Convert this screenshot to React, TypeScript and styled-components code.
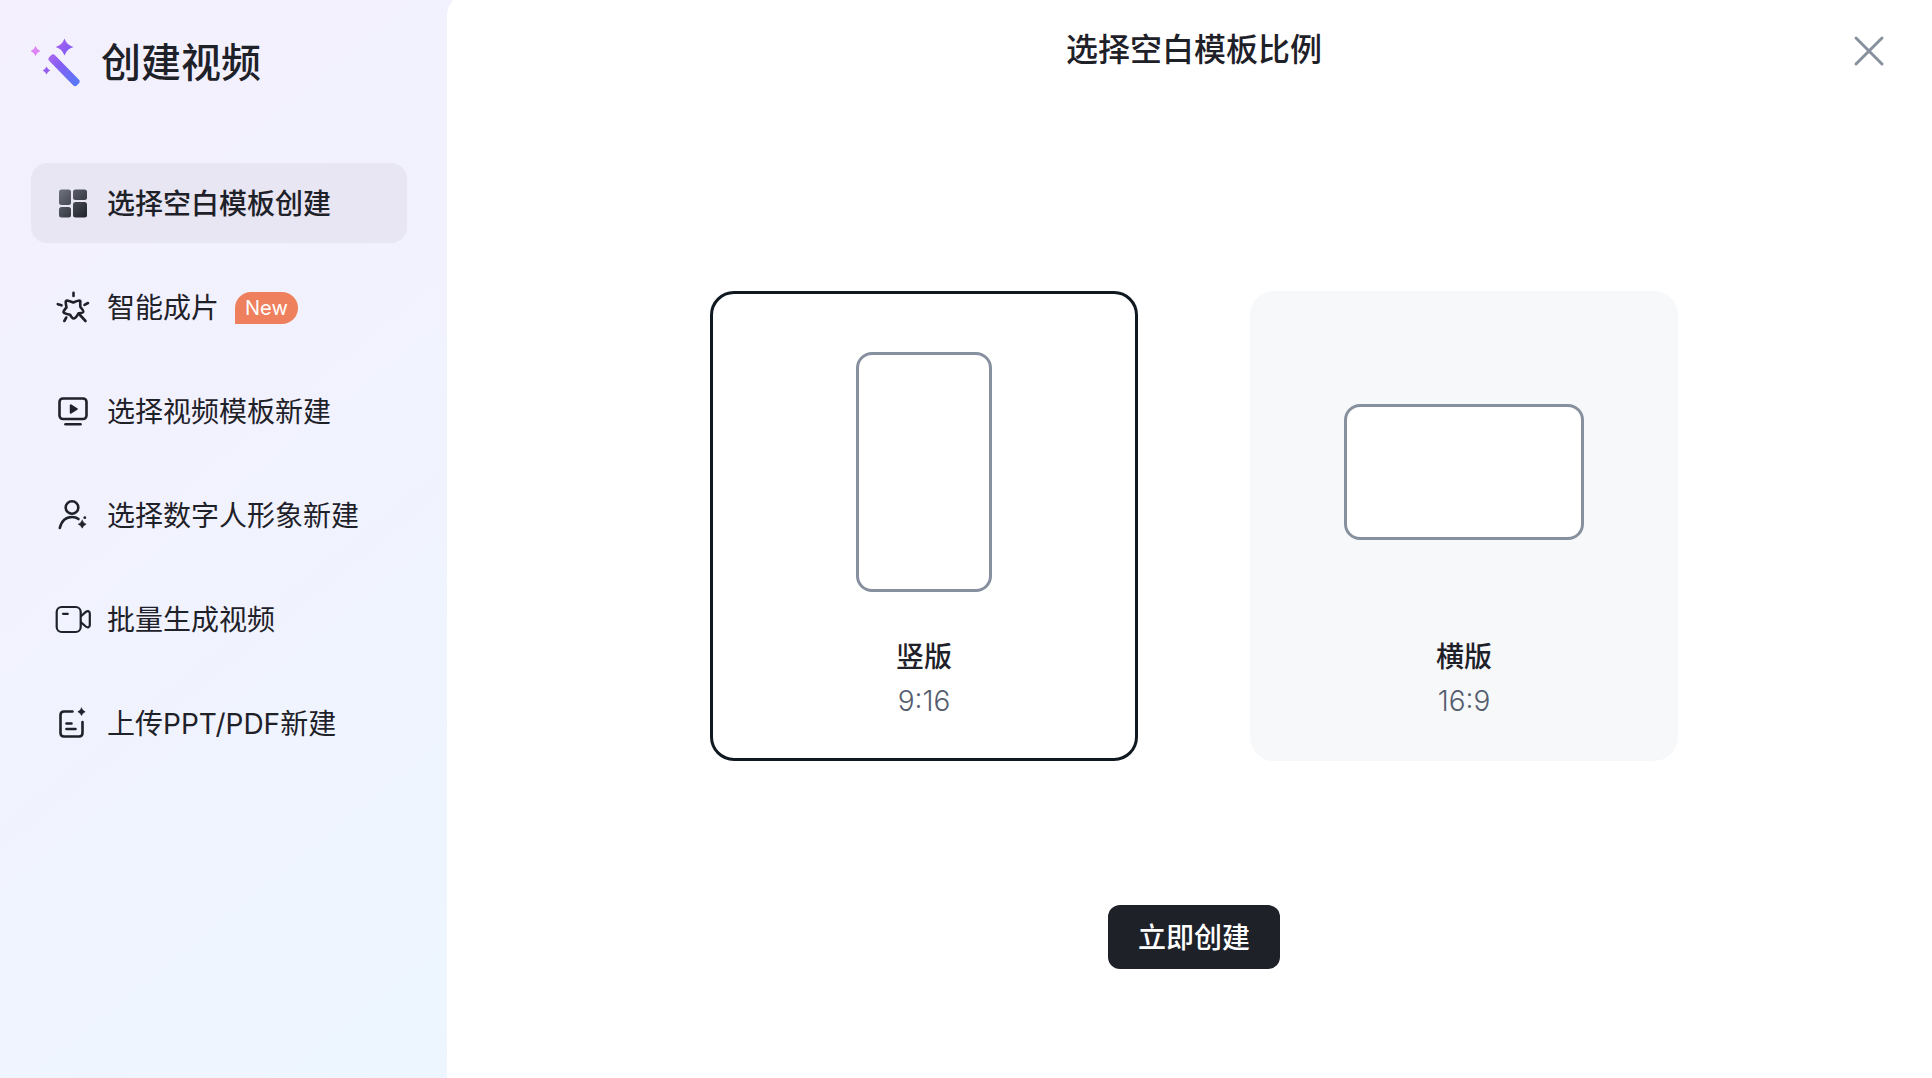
import React, { useState } from "react";
import styled, { createGlobalStyle } from "styled-components";

const GlobalStyle = createGlobalStyle`
  *, *::before, *::after { box-sizing: border-box; }
  body {
    margin: 0;
    font-family: Inter, "Noto Sans CJK SC", sans-serif;
    color: #1f2129;
    -webkit-font-smoothing: antialiased;
  }
  button { font: inherit; color: inherit; }
`;

const Page = styled.div`
  display: flex;
  min-height: 100vh;
  overflow: hidden;
  background: linear-gradient(141deg, #f4f0fe 0%, #f2f1fe 28%, #f0f3fe 58%, #eff5ff 80%, #edf6ff 100%);
  background-size: 456px 100%;
`;

const Sidebar = styled.aside`
  flex: none;
  width: 447px;
  padding: 31px 40px 32px 31px;
`;

const Brand = styled.header`
  display: flex;
  align-items: center;
  gap: 19px;
  height: 64px;
  margin-bottom: 68px;
`;

const BrandTitle = styled.h1`
  margin: 0;
  font-size: 40px;
  line-height: 64px;
  font-weight: 500;
`;

const NavList = styled.ul`
  display: flex;
  flex-direction: column;
  gap: 24px;
  margin: 0;
  padding: 0;
  list-style: none;
`;

const NavButton = styled.button<{ $active: boolean }>`
  display: flex;
  align-items: center;
  gap: 16px;
  width: 100%;
  height: 80px;
  padding: 1px 24px 0;
  border: 0;
  border-radius: 16px;
  background: ${(p) => (p.$active ? "#e7e6f2" : "transparent")};
  font-size: 28px;
  line-height: 40px;
  font-weight: ${(p) => (p.$active ? 500 : 400)};
  text-align: left;
  white-space: nowrap;
  cursor: pointer;

  svg { flex: none; }
`;

const Badge = styled.span`
  height: 32px;
  padding: 0 10px;
  border-radius: 16px 16px 16px 0;
  background: #ee805d;
  color: #fff;
  font-size: 20px;
  line-height: 32px;
  font-weight: 400;
`;

const Main = styled.main`
  display: flex;
  flex: 1;
  flex-direction: column;
  align-items: center;
  margin-top: -8px;
  padding: 32px 39px 32px 48px;
  border-radius: 24px 0 0 0;
  background: #fff;
`;

const TopBar = styled.header`
  display: grid;
  grid-template-columns: 1fr auto 1fr;
  align-items: center;
  width: 100%;
  height: 51px;
`;

const Heading = styled.h2`
  grid-column: 2;
  margin: 0;
  font-size: 32px;
  line-height: 48px;
  font-weight: 500;
`;

const CloseButton = styled.button`
  display: grid;
  place-items: center;
  align-self: end;
  justify-self: end;
  width: 48px;
  height: 48px;
  padding: 0;
  border: 0;
  background: none;
  color: #87909e;
  cursor: pointer;
`;

const Options = styled.div`
  display: flex;
  gap: 112px;
  margin-top: 216px;
`;

const OptionCard = styled.button<{ $selected: boolean }>`
  display: flex;
  flex-direction: column;
  align-items: center;
  width: 428px;
  height: 470px;
  padding: 58px 0 0;
  border: 3px solid ${(p) => (p.$selected ? "#101820" : "#f7f8fa")};
  border-radius: 24px;
  background: ${(p) => (p.$selected ? "#fff" : "#f7f8fa")};
  cursor: pointer;
`;

const Preview = styled.span`
  display: grid;
  place-items: center;
  height: 240px;
  margin-bottom: 45px;
`;

const Frame = styled.span<{ $wide: boolean }>`
  width: ${(p) => (p.$wide ? 240 : 136)}px;
  height: ${(p) => (p.$wide ? 136 : 240)}px;
  border: 3px solid #87909e;
  border-radius: 16px;
  background: #fff;
`;

const OptionName = styled.span`
  font-size: 28px;
  line-height: 40px;
  font-weight: 500;
`;

const OptionRatio = styled.span`
  margin-top: 4px;
  color: #545d6e;
  font-size: 28px;
  line-height: 40px;
  font-weight: 300;
`;

const CreateButton = styled.button`
  height: 64px;
  margin-top: 144px;
  padding: 2px 30px 0;
  border: 0;
  border-radius: 12px;
  background: #1f2129;
  color: #fff;
  font-size: 28px;
  line-height: 40px;
  font-weight: 500;
  cursor: pointer;
`;

const WandLogo = () => (
  <svg width="51" height="50" viewBox="0 0 51 50" aria-hidden="true">
    <defs>
      <linearGradient id="wand" x1="0" y1="0" x2="1" y2="0">
        <stop offset="0" stopColor="#a868f0" />
        <stop offset="0.3" stopColor="#865df4" />
        <stop offset="1" stopColor="#5679f8" />
      </linearGradient>
      <linearGradient id="spark" x1="26" y1="0" x2="42" y2="17" gradientUnits="userSpaceOnUse">
        <stop offset="0" stopColor="#a962ee" />
        <stop offset="1" stopColor="#7a5bf6" />
      </linearGradient>
    </defs>
    <rect x="13.300" y="28.300" width="39.500" height="8" rx="2.800" transform="rotate(45.500 33.100 32.300)" fill="url(#wand)" />
    <path d="M33.500 0.500Q35.800 7.200 42.500 9Q35.800 10.800 33.500 17.500Q31.200 10.800 24.500 9Q31.200 7.200 33.500 0.500Z" fill="url(#spark)" />
    <path d="M4.500 8Q5.800 11.700 9.500 13Q5.800 14.300 4.500 18Q3.200 14.300 -0.500 13Q3.200 11.700 4.500 8Z" fill="#de86f5" />
    <path d="M15.500 28.500Q16.600 31.400 19.300 32.500Q16.600 33.600 15.500 36.500Q14.400 33.600 11.700 32.500Q14.400 31.400 15.500 28.500Z" fill="#955cf0" />
  </svg>
);

const BlocksIcon = () => (
  <svg width="36" height="36" viewBox="0 0 36 36" aria-hidden="true">
    <defs>
      <linearGradient id="blocks" x1="4" y1="4" x2="32" y2="32" gradientUnits="userSpaceOnUse">
        <stop offset="0" stopColor="#6e727d" />
        <stop offset="1" stopColor="#1d2028" />
      </linearGradient>
    </defs>
    <g fill="url(#blocks)">
      <rect x="4" y="3.500" width="12" height="15.500" rx="2.500" />
      <rect x="18" y="3.500" width="14" height="10.500" rx="2.500" />
      <rect x="4" y="21" width="12" height="10.500" rx="2.500" />
      <rect x="18" y="16" width="14" height="15.500" rx="2.500" />
    </g>
  </svg>
);

const line = {
  width: 36,
  height: 36,
  viewBox: "0 0 36 36",
  fill: "none",
  stroke: "currentColor",
  strokeWidth: 2.6,
  strokeLinecap: "round" as const,
  strokeLinejoin: "round" as const,
  "aria-hidden": true,
};

const MagicIcon = () => (
  <svg {...line}>
    <path d="M12.200 10.500Q14.300 10.900 18.300 12.500Q22 10.700 24.500 10.500Q25.800 10.700 25.200 13L25.400 17Q28.500 20.500 28.300 21.800Q28 23 23.500 23.300Q20.500 28.500 18.500 28.500Q17 28.500 15 24.700Q9 23.500 8.500 22.200Q8.300 21 11.500 17.500Q10.500 12.500 10.800 11.300Q11.200 10.300 12.200 10.500Z" />
    <path d="M18.500 2.800V6M2.800 14.200 6.500 15.300M33 13 29.500 14.800M11.300 27.500 9.300 31M24.500 24.500 30.500 31" />
  </svg>
);

const ScreenIcon = () => (
  <svg {...line}>
    <rect x="4.500" y="4.500" width="27" height="20.500" rx="3.500" />
    <path d="M10.500 30.300H25.500" />
    <path d="M15.800 11.300 21.800 15 15.800 18.700Z" fill="currentColor" strokeWidth="2" />
  </svg>
);

const PersonIcon = () => (
  <svg {...line}>
    <circle cx="17" cy="9.500" r="6.300" />
    <path d="M4.800 30Q7.500 19 17 19Q21 19 23.500 21" />
    <path d="M27.200 22.200Q28.300 25.100 31.200 26.200Q28.300 27.300 27.200 30.200Q26.100 27.300 23.200 26.200Q26.100 25.100 27.200 22.200Z" fill="currentColor" strokeWidth="0.500" />
    <circle cx="29.800" cy="19.700" r="1.400" fill="currentColor" stroke="none" />
  </svg>
);

const CameraIcon = () => (
  <svg {...line} strokeWidth={2.2}>
    <rect x="1.700" y="5" width="24" height="25" rx="5" />
    <path d="M8 11.800H12.800" />
    <path d="M26 14.300 30.800 9.900Q32 8.900 33.300 9.100Q34.800 9.500 34.800 11.500V23Q34.800 25 33.300 25.300Q32 25.500 30.800 24.500L26 20.300" />
  </svg>
);

const DocumentIcon = () => (
  <svg {...line}>
    <path d="M17.500 5.500H9Q5.500 5.500 5.500 9V27Q5.500 30.500 9 30.500H24Q27.500 30.500 27.500 27V16" />
    <path d="M11.500 17.500H16.500M11.500 23H20.500" />
    <path d="M26.500 2Q27.500 4.800 30.200 5.800Q27.500 6.800 26.500 9.600Q25.500 6.800 22.800 5.800Q25.500 4.800 26.500 2Z" fill="currentColor" strokeWidth="0.500" />
  </svg>
);

const NAV = [
  { label: "选择空白模板创建", icon: BlocksIcon },
  { label: "智能成片", icon: MagicIcon, badge: "New" },
  { label: "选择视频模板新建", icon: ScreenIcon },
  { label: "选择数字人形象新建", icon: PersonIcon },
  { label: "批量生成视频", icon: CameraIcon },
  { label: "上传PPT/PDF新建", icon: DocumentIcon },
];

const RATIOS = [
  { name: "竖版", ratio: "9:16", wide: false },
  { name: "横版", ratio: "16:9", wide: true },
];

export default function App() {
  const [section, setSection] = useState(0);
  const [ratio, setRatio] = useState(0);

  return (
    <>
      <GlobalStyle />
      <Page>
        <Sidebar>
          <Brand>
            <WandLogo />
            <BrandTitle>创建视频</BrandTitle>
          </Brand>
          <nav>
            <NavList>
              {NAV.map(({ label, icon: Icon, badge }, i) => (
                <li key={label}>
                  <NavButton type="button" $active={i === section} onClick={() => setSection(i)}>
                    <Icon />
                    <span>{label}</span>
                    {badge && <Badge>{badge}</Badge>}
                  </NavButton>
                </li>
              ))}
            </NavList>
          </nav>
        </Sidebar>
        <Main>
          <TopBar>
            <Heading>选择空白模板比例</Heading>
            <CloseButton type="button" aria-label="关闭">
              <svg width="32" height="32" viewBox="0 0 32 32" stroke="currentColor" strokeWidth="3" strokeLinecap="round">
                <path d="M3 3 29 29M29 3 3 29" />
              </svg>
            </CloseButton>
          </TopBar>
          <Options>
            {RATIOS.map((r, i) => (
              <OptionCard
                key={r.ratio}
                type="button"
                aria-pressed={i === ratio}
                $selected={i === ratio}
                onClick={() => setRatio(i)}
              >
                <Preview>
                  <Frame $wide={r.wide} />
                </Preview>
                <OptionName>{r.name}</OptionName>
                <OptionRatio>{r.ratio}</OptionRatio>
              </OptionCard>
            ))}
          </Options>
          <CreateButton type="button">立即创建</CreateButton>
        </Main>
      </Page>
    </>
  );
}
